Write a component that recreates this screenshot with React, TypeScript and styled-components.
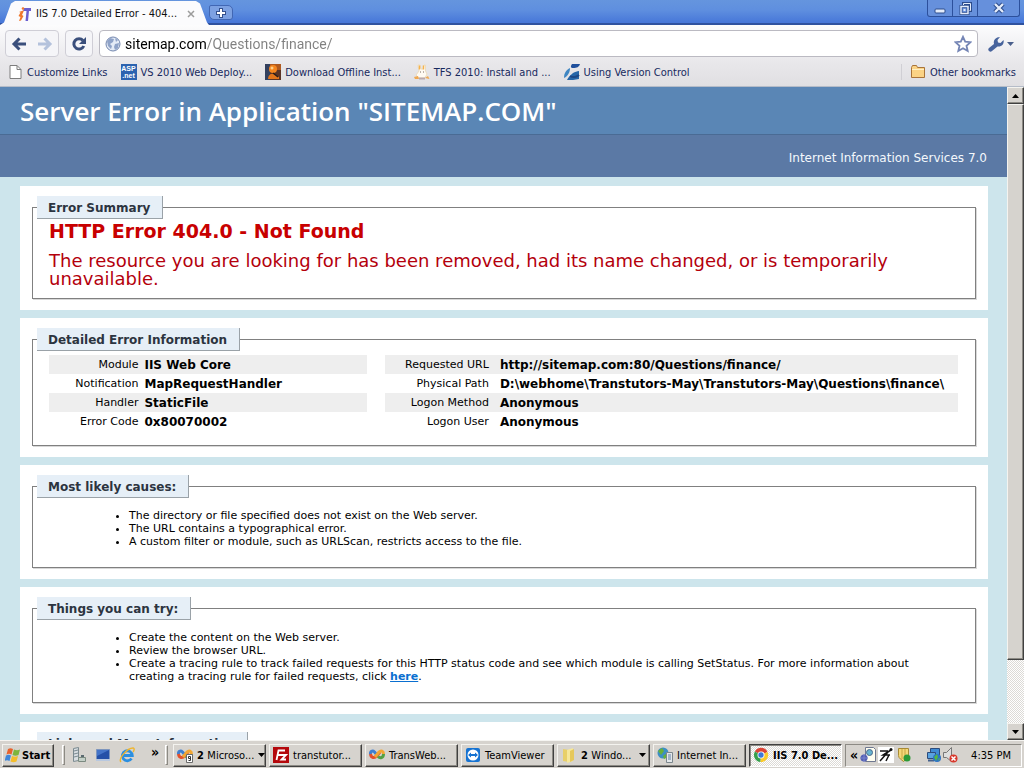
import React from "react";
import styled, { createGlobalStyle, css } from "styled-components";

const Global = createGlobalStyle`
  *, *::before, *::after { box-sizing: border-box; }
  html, body, #root { height: 100%; }
  body { margin: 0; overflow: hidden; background: #cde5ec; }
  button, input { font: inherit; color: inherit; }
`;

const uiFont = `"DejaVu Sans Condensed", "Noto Sans", sans-serif`;
const pageFont = `"DejaVu Sans", "Liberation Sans", sans-serif`;

const Screen = styled.div`
  display: flex;
  flex-direction: column;
  height: 100vh;
  font-family: ${uiFont};
  font-size: 11px;
`;

/* ---------- browser frame ---------- */

const TitleBar = styled.header`
  display: flex;
  align-items: flex-end;
  height: 25px;
  flex: none;
  background: linear-gradient(#6595de, #5f8fdf 40%, #4676d8 92%, #2f529f 94%);
`;

const Tab = styled.div`
  display: flex;
  align-items: center;
  gap: 4px;
  width: 209px;
  height: 25px;
  padding: 2px 14px 0 16px;
  background: #fbfbfd;
  clip-path: polygon(0 100%, 4px 90%, 11px 14%, 15px 4%, calc(100% - 13px) 4%, calc(100% - 9px) 14%, calc(100% - 2px) 90%, 100% 100%);
`;

const TabTitle = styled.span`
  flex: 1;
  color: #101010;
  white-space: nowrap;
`;

const PlainButton = styled.button`
  display: flex;
  align-items: center;
  justify-content: center;
  border: 0;
  padding: 0;
  background: none;
`;

const NewTab = styled(PlainButton)`
  width: 24px;
  height: 15px;
  margin: 0 0 5px;
  border: 1px solid #4167b4;
  border-radius: 2px 5px 3px 5px;
  background: #7da1e2;
`;

const WindowButtons = styled.div`
  display: flex;
  align-self: flex-start;
  height: 17px;
  margin: 0 4px 0 auto;
  border: 1px solid #2c509c;
  border-top: 0;
  border-radius: 0 0 3px 3px;
  background: #6690dc;
`;

const WindowButton = styled(PlainButton)<{ $wide?: boolean }>`
  width: ${(p) => (p.$wide ? 41 : 25)}px;
  border-right: 1px solid #2c509c;
  &:last-child { border-right: 0; }
`;

const Toolbar = styled.div`
  display: flex;
  align-items: center;
  flex: none;
  height: 36px;
  padding: 1px 10px 0 5px;
  background: linear-gradient(#fcfcfd, #e9e8eb);
`;

const NavGroup = styled.div`
  display: flex;
  height: 27px;
  margin-right: 6px;
  border: 1px solid #cfced6;
  border-radius: 4px;
  background: #f5f5f8;
`;

const NavButton = styled(PlainButton)`
  width: 26px;
`;

const Omnibox = styled.form`
  display: flex;
  flex: 1;
  align-items: center;
  height: 27px;
  margin: 0 10px 0 0;
  padding: 0 5px;
  border: 1px solid #bbbac2;
  border-radius: 4px;
  background: #fff;
`;

const Address = styled.input`
  flex: 1;
  min-width: 0;
  border: 0;
  padding: 0 0 0 4px;
  outline: 0;
  background: linear-gradient(90deg, #000 85px, #808080 85px);
  background-clip: text;
  -webkit-text-fill-color: transparent;
  font-family: Roboto, "Noto Sans", sans-serif;
  font-size: 14px;
`;

const BookmarksBar = styled.nav`
  display: flex;
  align-items: center;
  flex: none;
  height: 26px;
  padding: 0 8px 3px;
  border-bottom: 1px solid #b5bcc8;
  background: linear-gradient(#e9e8eb, #e0dfe2);
`;

const Bookmark = styled.a<{ $last?: boolean }>`
  display: flex;
  align-items: center;
  gap: 4px;
  margin-right: 13px;
  color: #17295e;
  text-decoration: none;
  white-space: nowrap;
  svg { flex: none; }
  ${(p) =>
    p.$last &&
    css`
      margin: 0 0 0 auto;
      padding-left: 8px;
      border-left: 1px solid #d0cfd4;
    `}
`;

/* ---------- error page ---------- */

const Viewport = styled.div`
  display: flex;
  flex: 1;
  min-height: 0;
`;

const Page = styled.main`
  flex: 1;
  min-width: 0;
  overflow: hidden;
  background: #cde5ec;
  font-family: ${pageFont};
  font-size: 11px;
  color: #000;
`;

const PageTitle = styled.h1`
  margin: 0;
  padding: 0 20px;
  height: 48px;
  border-bottom: 1px solid #4a6b94;
  background: #5a86b5;
  color: #fff;
  font-family: "Open Sans", "Noto Sans", sans-serif;
  font-size: 26px;
  font-weight: 600;
  line-height: 48px;
  white-space: nowrap;
`;

const ServerVersion = styled.p`
  margin: 0 0 9px;
  padding: 3px 20px 0;
  height: 42px;
  background: #5b79a5;
  color: #f4f8fc;
  font-size: 12px;
  line-height: 40px;
  text-align: right;
`;

const Panel = styled.section`
  margin: 0 19px 8px 20px;
  padding: 10px 12px 11px;
  background: #fff;
`;

const Box = styled.fieldset<{ $bottom: number }>`
  min-width: 0;
  margin: 0;
  padding: 0 17px ${(p) => p.$bottom}px 16px;
  border: 1px solid #808080;
  box-shadow: 1px 1px 0 #d8d8d8;
`;

const Legend = styled.legend`
  height: 23px;
  margin-left: -12px;
  padding: 0 12px 0 11px;
  border: solid #9aa2a8;
  border-width: 0 1px 1px 0;
  background: #e6eff7;
  color: #2c3440;
  font-size: 12px;
  font-weight: 700;
  line-height: 24px;
`;

const ErrorTitle = styled.h2`
  margin: 0;
  color: #c80000;
  font-size: 19px;
  line-height: 24px;
`;

const ErrorText = styled.h3`
  margin: 9px 0 0;
  color: #b4000c;
  font-size: 18px;
  font-weight: 400;
  line-height: 18px;
`;

const Tables = styled.div`
  display: flex;
  justify-content: space-between;
  margin-top: 4px;
`;

const Details = styled.table<{ $share: number }>`
  width: ${(p) => p.$share}%;
  border-collapse: collapse;
  table-layout: fixed;
  tr:nth-child(odd) { background: #eee; }
`;

const Label = styled.th<{ $share: number; $gap: number }>`
  width: ${(p) => p.$share}%;
  height: 19px;
  padding: 0 ${(p) => p.$gap}px 0 0;
  font-weight: 400;
  text-align: right;
  white-space: nowrap;
`;

const Value = styled.td`
  padding: 0;
  font-size: 12px;
  font-weight: 700;
  white-space: nowrap;
`;

const Bullets = styled.ul`
  margin: 11px 0 0;
  padding: 0 16px 0 80px;
  line-height: 13px;
  a { color: #0a6fd0; font-weight: 700; }
`;

/* ---------- scroll bar ---------- */

const raised = css`
  border: 1px solid;
  border-color: #f4f3ef #404040 #404040 #f4f3ef;
  box-shadow: inset -1px -1px 0 #8c8a84;
  background: #d6d3ce;
`;

const ScrollBar = styled.div`
  display: flex;
  flex-direction: column;
  flex: none;
  width: 17px;
  background: repeating-conic-gradient(#fff 0 25%, #dcdad6 0 50%) 0 0 / 2px 2px;
`;

const ScrollButton = styled(PlainButton)`
  ${raised}
  flex: none;
  height: 17px;
`;

const Thumb = styled.div`
  ${raised}
  flex: 557;
`;

const Track = styled.div`
  flex: 63;
`;

/* ---------- task bar ---------- */

const TaskBar = styled.footer`
  display: flex;
  align-items: center;
  flex: none;
  height: 28px;
  padding: 2px 2px 1px;
  border-top: 1px solid #f6f5f2;
  background: #d6d3ce;
`;

const TaskButton = styled.button<{ $active?: boolean }>`
  ${raised}
  display: flex;
  align-items: center;
  gap: 4px;
  flex: 1;
  min-width: 0;
  height: 23px;
  margin-right: 3px;
  padding: 0 3px;
  text-align: left;
  white-space: nowrap;
  svg { flex: none; }
  ${(p) =>
    p.$active &&
    css`
      border-color: #404040 #fff #fff #404040;
      box-shadow: inset 1px 1px 0 #8c8a84;
      background: repeating-conic-gradient(#fff 0 25%, #dcdad6 0 50%) 0 0 / 2px 2px;
      font-weight: 700;
    `}
`;

const StartButton = styled(TaskButton)`
  flex: none;
  gap: 1px;
  width: 52px;
  margin-right: 8px;
  padding: 0 2px;
  font-weight: 700;
`;

const Grip = styled.span`
  width: 3px;
  height: 20px;
  margin-right: 5px;
  border: 1px solid;
  border-color: #fff #8c8a84 #8c8a84 #fff;
`;

const QuickLaunch = styled.div`
  display: flex;
  align-items: center;
  gap: 8px;
  width: 95px;
  padding-left: 1px;
`;

const More = styled(PlainButton)`
  margin: 0 0 7px 8px;
  font-size: 14px;
  font-weight: 700;
  line-height: 14px;
`;

const Tray = styled.div`
  display: flex;
  align-items: center;
  flex: none;
  gap: 2px;
  width: 177px;
  height: 23px;
  padding: 0 10px 0 4px;
  border: 1px solid;
  border-color: #8c8a84 #fff #fff #8c8a84;
`;

const TrayToggle = styled(PlainButton)`
  font-size: 14px;
  font-weight: 700;
  line-height: 14px;
`;

const Clock = styled.time`
  margin-left: auto;
`;

/* ---------- drawings ---------- */

const Icon = ({ w = 16, h = 16, children }: { w?: number; h?: number; children: React.ReactNode }) => (
  <svg width={w} height={h} viewBox={`0 0 ${w} ${h}`} fill="none" aria-hidden="true">
    {children}
  </svg>
);

const SiteIcon = () => (
  <Icon>
    <path d="M8 2h7v3h-2l-1 10h-2.500l1-10H7z" fill="#6a5fd0" />
    <path d="M3 6l4-1.500h1L6 9l1.500 1L5 14.500l-2 .5 1.500-4L2.500 10l2-3.500z" fill="#f0782c" />
    <circle cx="7" cy="2.500" r="1.300" fill="#f0782c" />
  </Icon>
);

const BackIcon = ({ color }: { color: string }) => (
  <Icon>
    <path d="M15 8H3M8.500 2.500L3 8L8.500 13.500" stroke={color} strokeWidth="3" />
  </Icon>
);

const ForwardIcon = ({ color }: { color: string }) => (
  <Icon>
    <path d="M1 8h12M7.500 2.500L13 8L7.500 13.500" stroke={color} strokeWidth="3" />
  </Icon>
);

const ReloadIcon = () => (
  <Icon>
    <path d="M12 4.500A5.200 5.200 0 1 0 12.800 10" stroke="#3a4f7c" strokeWidth="3" />
    <path d="M15 1v7H8z" fill="#3a4f7c" />
  </Icon>
);

const GlobeIcon = () => (
  <Icon>
    <circle cx="8" cy="8" r="7" fill="#e4ebf6" stroke="#7286ae" />
    <path d="M2 5l3-3 4 1-1 3-3 2 2 2-1 3-3-3zM10 8l4-1-1 5-3 2-1-3zM10 2l3 2-2 2z" fill="#8fa3c8" />
  </Icon>
);

const StarIcon = () => (
  <Icon w={18} h={18}>
    <path d="M9 1.800l2.200 4.900 5.300.5-4 3.500 1.200 5.300L9 13.200 4.300 16l1.200-5.300-4-3.500 5.300-.5z" fill="#fff" stroke="#7485b5" strokeWidth="1.800" />
  </Icon>
);

const WrenchIcon = () => (
  <Icon w={26} h={16}>
    <path d="M1 15c-1-1-1-2 0-3l5-4c-1-4 2-7 6-7L9.500 4l.5 2.500 2.500.500L15.500 4c1 4-2 7-6 6.500L4 15c-1 1-2 1-3 0z" fill="#47639c" />
    <path d="M19 6h7l-3.500 4z" fill="#4a5f8c" />
  </Icon>
);

const PageIcon = () => (
  <Icon w={15}>
    <path d="M2 1.500h7l4 4v9H2z" fill="#fff" stroke="#7d7d7d" />
    <path d="M9 1.500v4h4" stroke="#7d7d7d" />
  </Icon>
);

const AspText = styled.span`
  display: flex;
  flex-direction: column;
  align-items: center;
  justify-content: center;
  width: 16px;
  height: 16px;
  background: #2c63b0;
  color: #fff;
  font: 700 7px/7px "Liberation Sans", sans-serif;
`;

const DownloadIcon = () => (
  <Icon>
    <path d="M0 0h16v16H0z" fill="#5a3426" />
    <path d="M0 0h16v6H0z" fill="#b05a20" />
    <path d="M0 0h5v16H0z" fill="#33405e" />
    <circle cx="8" cy="5" r="4" fill="#f5861f" />
    <path d="M3 15c0-4 3-6 6-5l5 3v2z" fill="#e4761b" />
    <path d="M8 9l5 4" stroke="#2a1c18" strokeWidth="1.500" />
    <circle cx="7" cy="4" r="1.500" fill="#ffd08a" />
  </Icon>
);

const RabbitIcon = () => (
  <Icon>
    <path d="M4 1h2l1 4h2l1-4h1.500v6l1.500 3-2 4H5l-3-3 3-4z" fill="#fffaf2" stroke="#ecdcc0" />
    <path d="M5.500 1.500v4M9.500 1.500v4" stroke="#f5b34c" strokeWidth="1.500" />
    <path d="M0 13l4-1 1 3H1zM11 14l3-2 1.500 3z" fill="#f0a850" />
    <path d="M5 14.500h6" stroke="#b9a8ac" strokeWidth="2" />
    <path d="M6 8h1M9 8h1" stroke="#7a6a60" />
  </Icon>
);

const SwooshIcon = () => (
  <Icon>
    <path d="M8 0h8c-1 3-3 4-7 4-2 0-3-1-1-4z" fill="#1f4f9c" />
    <path d="M6 4c0 4-2 8-6 10 0-5 2-8 6-10z" fill="#3f86c2" />
    <path d="M3 16c1-3 4-5 6-7 2-1 4-2 6-2v8c-4 1-8 1-12 1z" fill="#2666a8" />
    <path d="M6 12c3 2 7 1 9-1" stroke="#1c4886" strokeWidth="2" />
  </Icon>
);

const FolderIcon = () => (
  <Icon>
    <path d="M1.500 13.500v-10l1-2h4l1 2h7v10z" fill="#fbd385" stroke="#a9743a" />
    <path d="M2 5.500h12" stroke="#fff0c4" />
  </Icon>
);

const FlagIcon = () => (
  <Icon>
    <path d="M3 2c2-1 3-1 5 0L6.500 7.500c-2-1-3-1-5 0z" fill="#e8622c" />
    <path d="M9 2.500c2 1 4 1 6 0L13.500 8c-2 1-4 1-6 0z" fill="#7db53c" />
    <path d="M1 8.500c2-1 3-1 5 0L4.500 14c-2-1-3-1-5 0z" fill="#3f86d8" />
    <path d="M7 9c2 1 4 1 6 0l-1.500 5.500c-2 1-4 1-6 0z" fill="#f4bd2a" />
  </Icon>
);

const ServerIcon = () => (
  <Icon>
    <path d="M2.500 1.500l5-1v13l-5 1z" fill="#d8dee2" stroke="#7b8a90" />
    <path d="M3 4l4-1M3 7l4-1M3 10l4-1" stroke="#7b8a90" />
    <path d="M7.500 10.500h7v4h-7z" fill="#c4d0c8" stroke="#7b8a80" />
    <path d="M10 9h3" stroke="#5a6a70" strokeWidth="2" />
  </Icon>
);

const DesktopIcon = () => (
  <Icon>
    <path d="M1.500 2.500h13v10h-13z" fill="#2450a8" stroke="#7d95bd" />
    <path d="M2 3h12L2 9z" fill="#4474c8" />
    <path d="M1 13h14" stroke="#b8c8e0" strokeWidth="2" />
  </Icon>
);

const ExplorerIcon = () => (
  <Icon>
    <path d="M12.500 11.500a5 5 0 1 1 .800-3H4" stroke="#2b8fe0" strokeWidth="2.800" />
    <path d="M2 15C-1 12 8 1 14 1c2 0 1 3 0 4" stroke="#efb52c" strokeWidth="1.400" />
  </Icon>
);

const OfficeIcon = ({ paper }: { paper?: boolean }) => (
  <Icon>
    <path d="M8 8L5.500 5C3.500 3 1 4.500 1.500 7.500" stroke="#3f7fd0" strokeWidth="3" />
    <path d="M1.500 7c.5 4 4 4.500 6 2L11 5" stroke="#e2502c" strokeWidth="3" />
    <path d="M6 10l4-5c2-2 4.500-1 4.500 2" stroke="#f2a632" strokeWidth="3" />
    <path d="M14.500 7c0 4-3.500 4.500-5.500 2.500" stroke="#54a044" strokeWidth="3" />
    {paper && <path d="M9.500 7.500h6v8h-6z" fill="#fff" stroke="#6a6a6a" />}
    {paper && <path d="M13.500 11.500h-2v-2h2v4h-2" stroke="#333" />}
  </Icon>
);

const FileZillaIcon = () => (
  <Icon>
    <path d="M0 0h16v16H0z" fill="#b4080c" />
    <path d="M3.500 13L5.500 3.500H12M4.500 8h4M8 8h5l-4.500 4.500H13" stroke="#fff" strokeWidth="1.800" />
  </Icon>
);

const TeamIcon = () => (
  <Icon>
    <rect x="1" y="1" width="14" height="14" rx="2" fill="#1673d2" />
    <circle cx="8" cy="8" r="5.500" fill="#fff" />
    <path d="M3 8l3-2.500V7h4V5.500L13 8l-3 2.500V9H6v1.500z" fill="#1673d2" />
  </Icon>
);

const FoldersIcon = () => (
  <Icon>
    <path d="M2 2l6 1v12l-6-1z" fill="#e8cf68" />
    <path d="M6 3l6-2v13l-6 2z" fill="#f6e79a" />
    <path d="M9 4l4-2v11l-4 2z" fill="#e6c85a" />
  </Icon>
);

const IisIcon = () => (
  <Icon>
    <circle cx="6" cy="6" r="5.500" fill="#3d8fc4" />
    <path d="M1 4l4-3 2 3-3 4zM6 9l4-3 1 4-4 2z" fill="#66b03c" />
    <path d="M9.500 5.500h6v10h-6z" fill="#e4e8ea" stroke="#7b868c" />
    <path d="M11 8h3M11 10h3M11 12h3" stroke="#5f7fa8" />
  </Icon>
);

const ChromeIcon = () => (
  <Icon>
    <path d="M8 8L1.900 4.500A7 7 0 0 1 14.500 5z" fill="#dc4436" />
    <path d="M8 8L1.900 4.500A7 7 0 0 0 7.500 15z" fill="#37a04c" />
    <path d="M8 8l6.500-3A7 7 0 0 1 7.500 15z" fill="#fbcb2c" />
    <circle cx="8" cy="8" r="3.500" fill="#fff" />
    <circle cx="8" cy="8" r="2.700" fill="#3d78d8" />
  </Icon>
);

const SearchPageIcon = () => (
  <Icon>
    <path d="M5.500 .5h8l2 2v12h-10z" fill="#fffef0" stroke="#6f7890" />
    <circle cx="9.500" cy="5.500" r="3" fill="#68b4d0" stroke="#47688c" />
    <circle cx="4" cy="11" r="3.500" fill="#5360b4" />
    <path d="M0 11h8M4 7v8" stroke="#7a84cc" />
  </Icon>
);

const RunnerIcon = () => (
  <Icon>
    <path d="M0 0h16v16H0z" fill="#fff" />
    <path d="M2 4h8M13 3L5 8h7M10 5L2 14M11 8l-3 6" stroke="#111" strokeWidth="1.500" />
    <circle cx="13" cy="2.500" r="1.500" fill="#111" />
  </Icon>
);

const ShieldIcon = () => (
  <Icon>
    <path d="M2.500 1.500h10v7c0 3-3 4-5 6-2-2-5-3-5-6z" fill="#f4d878" stroke="#a88a34" />
    <path d="M6 2v10M9 2v10" stroke="#c8a444" />
    <circle cx="11" cy="11" r="3.500" fill="#2c9a38" />
  </Icon>
);

const NetworkIcon = () => (
  <Icon>
    <path d="M4.500 1.500h9v7h-9z" fill="#3f8ad4" stroke="#2d4c7c" />
    <path d="M1.500 5.500h8v6h-8z" fill="#5aa2e0" stroke="#2d4c7c" />
    <path d="M2 13.500h6" stroke="#45618c" strokeWidth="2" />
    <circle cx="11" cy="11" r="4" fill="#2c72c8" />
    <path d="M8 10l3-3 1 3-2 4zM12 12l2-1-1 3z" fill="#55b840" />
  </Icon>
);

const MutedIcon = () => (
  <Icon>
    <path d="M1.500 5.500h3l5-5v14l-5-4h-3z" fill="#dedede" stroke="#777" />
    <circle cx="11.500" cy="11.500" r="4" fill="#d8382c" />
    <path d="M9.500 9.500l4 4M13.500 9.500l-4 4" stroke="#fff" strokeWidth="1.500" />
  </Icon>
);

const Caret = ({ up }: { up?: boolean }) => (
  <Icon w={7} h={4}>
    <path d={up ? "M0 4h7L3.500 0z" : "M0 0h7L3.500 4z"} fill="#000" />
  </Icon>
);

const PushRight = styled.span`
  display: flex;
  margin-left: auto;
`;

/* ---------- data ---------- */

const bookmarks = [
  { text: "Customize Links", icon: <PageIcon /> },
  { text: "VS 2010 Web Deploy...", icon: <AspText aria-hidden="true"><span>ASP</span><span>.net</span></AspText> },
  { text: "Download Offline Inst...", icon: <DownloadIcon /> },
  { text: "TFS 2010: Install and ...", icon: <RabbitIcon /> },
  { text: "Using Version Control", icon: <SwooshIcon /> },
];

const requestRows = [
  ["Module", "IIS Web Core"],
  ["Notification", "MapRequestHandler"],
  ["Handler", "StaticFile"],
  ["Error Code", "0x80070002"],
];

const urlRows = [
  ["Requested URL", "http://sitemap.com:80/Questions/finance/"],
  ["Physical Path", "D:\\webhome\\Transtutors-May\\Transtutors-May\\Questions\\finance\\"],
  ["Logon Method", "Anonymous"],
  ["Logon User", "Anonymous"],
];

const tasks = [
  { count: 2, text: "Microso...", icon: <OfficeIcon paper />, menu: true },
  { text: "transtutor...", icon: <FileZillaIcon /> },
  { text: "TransWeb...", icon: <OfficeIcon /> },
  { text: "TeamViewer", icon: <TeamIcon /> },
  { count: 2, text: "Windo...", icon: <FoldersIcon />, menu: true },
  { text: "Internet In...", icon: <IisIcon /> },
  { text: "IIS 7.0 De...", icon: <ChromeIcon />, active: true },
];

const DetailTable = ({ rows, share, labelShare, gap }: { rows: string[][]; share: number; labelShare: number; gap: number }) => (
  <Details $share={share}>
    <tbody>
      {rows.map(([label, value]) => (
        <tr key={label}>
          <Label scope="row" $share={labelShare} $gap={gap}>{label}</Label>
          <Value>{value}</Value>
        </tr>
      ))}
    </tbody>
  </Details>
);

export default function App() {
  return (
    <Screen>
      <Global />
      <TitleBar>
        <Tab>
          <SiteIcon />
          <TabTitle>IIS 7.0 Detailed Error - 404...</TabTitle>
          <PlainButton aria-label="Close tab">
            <Icon w={8} h={8}>
              <path d="M1 1l6 6M7 1L1 7" stroke="#9c9c9c" strokeWidth="1.500" />
            </Icon>
          </PlainButton>
        </Tab>
        <NewTab aria-label="New tab">
          <Icon w={10} h={10}>
            <path d="M5 0v10M0 5h10" stroke="#34508c" strokeWidth="4" />
            <path d="M5 1v8M1 5h8" stroke="#fff" strokeWidth="2" />
          </Icon>
        </NewTab>
        <WindowButtons>
          <WindowButton aria-label="Minimize">
            <Icon w={12} h={12}>
              <rect x="1" y="7" width="10" height="4" rx="1" fill="#e4ecfa" stroke="#2c4c8c" />
            </Icon>
          </WindowButton>
          <WindowButton aria-label="Restore">
            <Icon w={13} h={13}>
              <path d="M4.500 1.500h7v7h-7z" stroke="#2c4c8c" strokeWidth="3" />
              <path d="M4.500 1.500h7v7h-7z" stroke="#e4ecfa" />
              <path d="M2 4.500h7v7H2z" fill="#6690dc" stroke="#2c4c8c" strokeWidth="3" />
              <path d="M2 4.500h7v7H2z" stroke="#e4ecfa" strokeWidth="1.500" />
              <path d="M4.500 7h2v2h-2z" fill="#e4ecfa" />
            </Icon>
          </WindowButton>
          <WindowButton $wide aria-label="Close">
            <Icon w={12} h={12}>
              <path d="M2 2l8 8M10 2l-8 8" stroke="#2c4c8c" strokeWidth="4.500" />
              <path d="M2 2l8 8M10 2l-8 8" stroke="#e4ecfa" strokeWidth="2.400" />
            </Icon>
          </WindowButton>
        </WindowButtons>
      </TitleBar>

      <Toolbar>
        <NavGroup>
          <NavButton aria-label="Back"><BackIcon color="#3a4f7c" /></NavButton>
          <NavButton aria-label="Forward"><ForwardIcon color="#b4c2dc" /></NavButton>
        </NavGroup>
        <NavGroup>
          <NavButton aria-label="Reload"><ReloadIcon /></NavButton>
        </NavGroup>
        <Omnibox>
          <GlobeIcon />
          <Address aria-label="Address" defaultValue="sitemap.com/Questions/finance/" spellCheck={false} />
          <PlainButton type="button" aria-label="Bookmark this page"><StarIcon /></PlainButton>
        </Omnibox>
        <PlainButton aria-label="Customize and control"><WrenchIcon /></PlainButton>
      </Toolbar>

      <BookmarksBar>
        {bookmarks.map((b) => (
          <Bookmark href="#" key={b.text}>{b.icon}{b.text}</Bookmark>
        ))}
        <Bookmark href="#" $last><FolderIcon />Other bookmarks</Bookmark>
      </BookmarksBar>

      <Viewport>
        <Page>
          <PageTitle>Server Error in Application "SITEMAP.COM"</PageTitle>
          <ServerVersion>Internet Information Services 7.0</ServerVersion>

          <Panel>
            <Box $bottom={10}>
              <Legend>Error Summary</Legend>
              <ErrorTitle>HTTP Error 404.0 - Not Found</ErrorTitle>
              <ErrorText>
                The resource you are looking for has been removed, had its name changed, or is temporarily unavailable.
              </ErrorText>
            </Box>
          </Panel>

          <Panel>
            <Box $bottom={14}>
              <Legend>Detailed Error Information</Legend>
              <Tables>
                <DetailTable rows={requestRows} share={35} labelShare={30} gap={6} />
                <DetailTable rows={urlRows} share={63} labelShare={20} gap={11} />
              </Tables>
            </Box>
          </Panel>

          <Panel>
            <Box $bottom={19}>
              <Legend>Most likely causes:</Legend>
              <Bullets>
                <li>The directory or file specified does not exist on the Web server.</li>
                <li>The URL contains a typographical error.</li>
                <li>A custom filter or module, such as URLScan, restricts access to the file.</li>
              </Bullets>
            </Box>
          </Panel>

          <Panel>
            <Box $bottom={19}>
              <Legend>Things you can try:</Legend>
              <Bullets>
                <li>Create the content on the Web server.</li>
                <li>Review the browser URL.</li>
                <li>
                  Create a tracing rule to track failed requests for this HTTP status code and see which module is
                  calling SetStatus. For more information about creating a tracing rule for failed requests, click{" "}
                  <a href="#">here</a>.
                </li>
              </Bullets>
            </Box>
          </Panel>

          <Panel>
            <Box $bottom={19}>
              <Legend>Links and More Information</Legend>
            </Box>
          </Panel>
        </Page>

        <ScrollBar>
          <ScrollButton aria-label="Scroll up"><Caret up /></ScrollButton>
          <Thumb />
          <Track />
          <ScrollButton aria-label="Scroll down"><Caret /></ScrollButton>
        </ScrollBar>
      </Viewport>

      <TaskBar>
        <StartButton><FlagIcon />Start</StartButton>
        <Grip />
        <QuickLaunch>
          <PlainButton aria-label="Server Manager"><ServerIcon /></PlainButton>
          <PlainButton aria-label="Show desktop"><DesktopIcon /></PlainButton>
          <PlainButton aria-label="Internet Explorer"><ExplorerIcon /></PlainButton>
          <More aria-label="More shortcuts">»</More>
        </QuickLaunch>
        <Grip />
        {tasks.map((t) => (
          <TaskButton key={t.text} $active={t.active}>
            {t.icon}
            <span>{t.count && <b>{t.count} </b>}{t.text}</span>
            {t.menu && <PushRight><Caret /></PushRight>}
          </TaskButton>
        ))}
        <Tray>
          <TrayToggle aria-label="Show hidden icons">«</TrayToggle>
          <SearchPageIcon />
          <RunnerIcon />
          <ShieldIcon />
          <PushRight><NetworkIcon /><MutedIcon /></PushRight>
          <Clock>4:35 PM</Clock>
        </Tray>
      </TaskBar>
    </Screen>
  );
}
